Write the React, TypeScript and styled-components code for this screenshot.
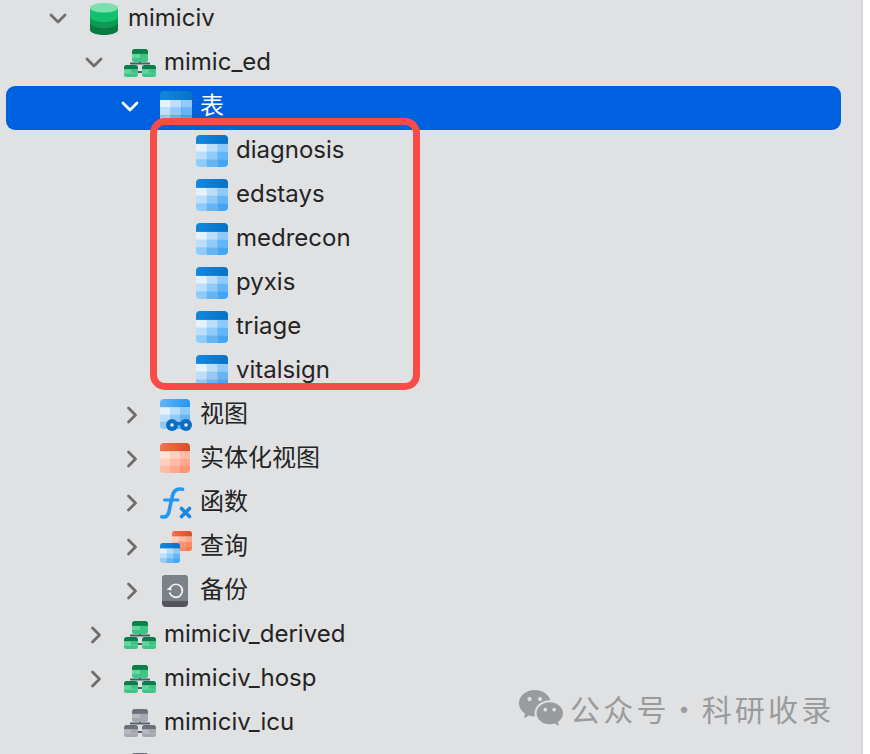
import React, { useId } from 'react';
import styled, { createGlobalStyle } from 'styled-components';
import { RiWechatFill } from 'react-icons/ri';

const GlobalStyle = createGlobalStyle`
  html, body {
    margin: 0;
    padding: 0;
    height: 100%;
    overflow: hidden;
    background: #ffffff;
  }
`;

const SPage = styled.div`
  position: relative;
  width: 870px;
  height: 754px;
  overflow: hidden;
`;

const SPanel = styled.div`
  box-sizing: border-box;
  width: 863px;
  height: 754px;
  padding: 0 20px 0 6px;
  background: #e0e1e3;
  border-right: 2px solid #d6d7d9;
  overflow: hidden;
`;

const STree = styled.div`
  margin-top: -2px;
  display: flex;
  flex-direction: column;
`;

const SRow = styled.div<{ $level: number; $selected?: boolean }>`
  box-sizing: border-box;
  flex: none;
  height: 44px;
  padding: 0 0 2px ${({ $level }) => 34 + $level * 36}px;
  display: flex;
  align-items: center;
  border-radius: 9px;
  background: ${({ $selected }) => ($selected ? '#0061e0' : 'transparent')};
  color: ${({ $selected }) => ($selected ? '#ffffff' : '#242424')};
  font-family: Inter, 'Noto Sans CJK SC', sans-serif;
  font-size: 24px;
  line-height: 30px;
  white-space: nowrap;
`;

const SChevronSlot = styled.span<{ $selected?: boolean; $closed?: boolean }>`
  flex: none;
  box-sizing: border-box;
  width: 36px;
  margin-right: 12px;
  padding-left: ${({ $closed }) => ($closed ? 4 : 0)}px;
  display: flex;
  justify-content: center;
  color: ${({ $selected }) => ($selected ? '#ffffff' : '#6e6e6e')};
`;

const SIconSlot = styled.span`
  flex: none;
  width: 32px;
  height: 32px;
  margin-right: 8px;
  display: block;

  & svg {
    display: block;
  }
`;

const SLabel = styled.span`
  padding-bottom: 2px;
`;

const SHighlight = styled.div`
  position: absolute;
  left: 150px;
  top: 118px;
  box-sizing: border-box;
  width: 270px;
  height: 272px;
  border: 7.5px solid #f94c48;
  border-radius: 15px;
`;

const SWatermark = styled.div`
  position: absolute;
  left: 517px;
  top: 684px;
  display: flex;
  align-items: center;
  gap: 5px;
  color: #9a9b9c;
  font-family: 'Noto Sans CJK SC', sans-serif;
  font-size: 30px;
  line-height: 44px;
  letter-spacing: 3.2px;
  word-spacing: -10.5px;
  white-space: nowrap;
`;

type Cells = string[][];

const BLUE_CELLS: Cells = [
  ['#e3f2fd', '#bbdefb', '#90caf9'],
  ['#bbdefb', '#90caf9', '#64b5f6'],
  ['#90caf9', '#64b5f6', '#42a5f5'],
];

const ORANGE_CELLS: Cells = [
  ['#ffe3d9', '#ffd0c0', '#ffbba5'],
  ['#ffd0c0', '#ffbba5', '#ffa78c'],
  ['#ffbba5', '#ffa78c', '#ff9575'],
];

interface IGridProps {
  x: number;
  y: number;
  w: number;
  h: number;
  header: [string, string];
  cells: Cells;
  radius?: number;
}

const TableGrid = ({ x, y, w, h, header, cells, radius = 4 }: IGridProps) => {
  const id = useId();
  const headH = h * 0.28;
  const cellH = (h - headH) / 3;
  const cellW = w / 3;
  return (
    <g clipPath={`url(#clip${id})`}>
      <defs>
        <clipPath id={`clip${id}`}>
          <rect x={x} y={y} width={w} height={h} rx={radius} />
        </clipPath>
        <linearGradient id={`head${id}`} x1="0" y1="0" x2="1" y2="0">
          <stop offset="0" stopColor={header[0]} />
          <stop offset="1" stopColor={header[1]} />
        </linearGradient>
      </defs>
      <rect x={x} y={y} width={w} height={headH} fill={`url(#head${id})`} />
      {cells.map((row, r) =>
        row.map((fill, c) => (
          <rect
            key={`${r}-${c}`}
            x={x + c * cellW}
            y={y + headH + r * cellH}
            width={cellW + 0.2}
            height={cellH + 0.2}
            fill={fill}
          />
        )),
      )}
    </g>
  );
};

const Svg = ({ children }: { children: React.ReactNode }) => (
  <svg width="32" height="32" viewBox="0 0 32 32">
    {children}
  </svg>
);

const TableIcon = () => (
  <Svg>
    <TableGrid x={0} y={0} w={32} h={32} header={['#1088e0', '#0672c8']} cells={BLUE_CELLS} />
  </Svg>
);

const ViewIcon = () => (
  <Svg>
    <TableGrid x={0} y={0} w={30} h={30} header={['#64b5f6', '#2196f3']} cells={BLUE_CELLS} />
    <rect x={14} y={23} width={10} height={3} fill="#0a6fc2" />
    <circle cx={12} cy={26} r={6} fill="#0a6fc2" />
    <circle cx={26} cy={26} r={6} fill="#0a6fc2" />
    <circle cx={12} cy={26} r={1.800} fill="#e3f2fd" />
    <circle cx={26} cy={26} r={1.800} fill="#e3f2fd" />
  </Svg>
);

const MaterializedIcon = () => (
  <Svg>
    <TableGrid x={0} y={0} w={30} h={30} header={['#f9704a', '#d84c26']} cells={ORANGE_CELLS} />
  </Svg>
);

const FunctionIcon = () => (
  <Svg>
    <path
      d="M1.800 29.800c3.700.8 6-.8 7-4.600L12.400 9C13.400 4 16.500 1.200 22.500 2.200"
      fill="none"
      stroke="#2196f3"
      strokeWidth="3.600"
      strokeLinecap="round"
    />
    <path d="M4.500 13h13.500" fill="none" stroke="#2196f3" strokeWidth="3" strokeLinecap="round" />
    <path
      d="M21.500 21.500l8 8M29.500 21.500l-8 8"
      fill="none"
      stroke="#1c86e0"
      strokeWidth="3.600"
      strokeLinecap="round"
    />
  </Svg>
);

const QueryIcon = () => (
  <Svg>
    <TableGrid x={12} y={0} w={20} h={20} radius={3} header={['#f9704a', '#d84c26']} cells={[
      ['#ffd0c0', '#ffbba5', '#ffa78c'],
      ['#ffbba5', '#ff9575', '#ff8a65'],
      ['#ffa78c', '#ff8a65', '#ff7a50'],
    ]} />
    <TableGrid x={0} y={12} w={20} h={20} radius={3} header={['#1088e0', '#0672c8']} cells={BLUE_CELLS} />
  </Svg>
);

const BackupIcon = () => (
  <Svg>
    <rect x={2} y={0} width={26} height={32} rx={4} fill="#50565c" />
    <path d="M2 4a4 4 0 0 1 4-4h18a4 4 0 0 1 4 4v22H2z" fill="#7a8189" />
    <path
      d="M11 11.500a6.500 6.500 0 1 1-1.200 6.500"
      fill="none"
      stroke="#f4f5f6"
      strokeWidth="1.700"
      strokeLinecap="round"
    />
    <path d="M6.500 14.500l4.500-3.500.6 4.500z" fill="#f4f5f6" />
  </Svg>
);

const DatabaseIcon = () => (
  <Svg>
    <path d="M2 5v22c0 2.800 6.300 5 14 5s14-2.200 14-5V5z" fill="#0a7a42" />
    <path d="M2 5v15c0 2.800 6.300 5 14 5s14-2.200 14-5V5z" fill="#0e9a55" />
    <path d="M2 5v9c0 2.800 6.300 5 14 5s14-2.200 14-5V5z" fill="#12bf6c" />
    <ellipse cx={16} cy={4.800} rx={14} ry={4.800} fill="#7ce0ae" />
  </Svg>
);

interface ISchemaPalette {
  head: string;
  cell: string;
  cellAlt: string;
  line: string;
}

const GREEN: ISchemaPalette = { head: '#0a8048', cell: '#3cc585', cellAlt: '#62d69e', line: '#4a5a68' };
const GRAY: ISchemaPalette = { head: '#6b7078', cell: '#a4a9b0', cellAlt: '#b6bac0', line: '#566070' };

const SchemaBox = ({ x, y, w, h, p }: { x: number; y: number; w: number; h: number; p: ISchemaPalette }) => {
  const id = useId();
  return (
    <g clipPath={`url(#box${id})`}>
      <defs>
        <clipPath id={`box${id}`}>
          <rect x={x} y={y} width={w} height={h} rx={2.500} />
        </clipPath>
      </defs>
      <rect x={x} y={y} width={w} height={h * 0.38} fill={p.head} />
      <rect x={x} y={y + h * 0.38} width={w / 2} height={h * 0.31} fill={p.cellAlt} />
      <rect x={x + w / 2} y={y + h * 0.38} width={w / 2} height={h * 0.31} fill={p.cell} />
      <rect x={x} y={y + h * 0.69} width={w} height={h * 0.31} fill={p.cell} />
    </g>
  );
};

const SchemaIcon = ({ p }: { p: ISchemaPalette }) => (
  <Svg>
    <path d="M16 14v3M6 16.500h20M13.500 25h5" fill="none" stroke={p.line} strokeWidth="2" />
    <SchemaBox x={8} y={2} w={16} h={13} p={p} />
    <SchemaBox x={0} y={18} w={14} h={12} p={p} />
    <SchemaBox x={18} y={18} w={14} h={12} p={p} />
  </Svg>
);

const Chevron = ({ open }: { open: boolean }) =>
  open ? (
    <svg width="18" height="12" viewBox="0 0 18 12">
      <path d="M2 2l7 7 7-7" fill="none" stroke="currentColor" strokeWidth="2.800" strokeLinecap="round" strokeLinejoin="round" />
    </svg>
  ) : (
    <svg width="12" height="18" viewBox="0 0 12 18">
      <path d="M2.500 2l7 7-7 7" fill="none" stroke="currentColor" strokeWidth="2.800" strokeLinecap="round" strokeLinejoin="round" />
    </svg>
  );

interface ITreeItem {
  level: number;
  label: string;
  icon: React.ReactNode;
  chevron?: 'open' | 'closed';
  selected?: boolean;
}

const TREE: ITreeItem[] = [
  { level: 0, label: 'mimiciv', icon: <DatabaseIcon />, chevron: 'open' },
  { level: 1, label: 'mimic_ed', icon: <SchemaIcon p={GREEN} />, chevron: 'open' },
  { level: 2, label: '表', icon: <TableIcon />, chevron: 'open', selected: true },
  { level: 3, label: 'diagnosis', icon: <TableIcon /> },
  { level: 3, label: 'edstays', icon: <TableIcon /> },
  { level: 3, label: 'medrecon', icon: <TableIcon /> },
  { level: 3, label: 'pyxis', icon: <TableIcon /> },
  { level: 3, label: 'triage', icon: <TableIcon /> },
  { level: 3, label: 'vitalsign', icon: <TableIcon /> },
  { level: 2, label: '视图', icon: <ViewIcon />, chevron: 'closed' },
  { level: 2, label: '实体化视图', icon: <MaterializedIcon />, chevron: 'closed' },
  { level: 2, label: '函数', icon: <FunctionIcon />, chevron: 'closed' },
  { level: 2, label: '查询', icon: <QueryIcon />, chevron: 'closed' },
  { level: 2, label: '备份', icon: <BackupIcon />, chevron: 'closed' },
  { level: 1, label: 'mimiciv_derived', icon: <SchemaIcon p={GREEN} />, chevron: 'closed' },
  { level: 1, label: 'mimiciv_hosp', icon: <SchemaIcon p={GREEN} />, chevron: 'closed' },
  { level: 1, label: 'mimiciv_icu', icon: <SchemaIcon p={GRAY} /> },
  { level: 1, label: '', icon: <SchemaIcon p={GRAY} /> },
];

const App = () => (
  <SPage>
    <GlobalStyle />
    <SPanel>
      <STree>
        {TREE.map((item, i) => (
          <SRow key={i} $level={item.level} $selected={item.selected}>
            <SChevronSlot $selected={item.selected} $closed={item.chevron === 'closed'}>
              {item.chevron && <Chevron open={item.chevron === 'open'} />}
            </SChevronSlot>
            <SIconSlot>{item.icon}</SIconSlot>
            <SLabel>{item.label}</SLabel>
          </SRow>
        ))}
      </STree>
    </SPanel>
    <SHighlight />
    <SWatermark>
      <RiWechatFill size={48} />
      公众号 · 科研收录
    </SWatermark>
  </SPage>
);

export default App;
